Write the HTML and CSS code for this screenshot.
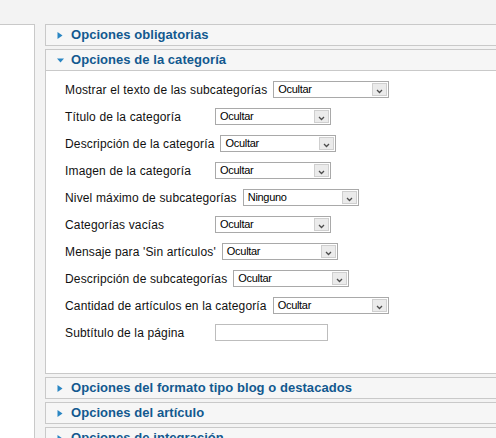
FILE: index.html
```html
<!DOCTYPE html>
<html lang="es">
<head>
<meta charset="utf-8">
<title>Opciones</title>
<link rel="stylesheet" href="styles.css">
</head>
<body>
<div class="top"></div>
<div class="main">
  <aside class="side"></aside>
  <div class="panes">
    <div class="panel">
      <h3 class="panel-title"><svg class="arrow" width="7" height="7" viewBox="0 0 7 7"><path d="M0.5 0L5.5 3.5L0.5 7Z"/></svg><span>Opciones obligatorias</span></h3>
    </div>
    <div class="panel open">
      <h3 class="panel-title"><svg class="arrow" width="7" height="7" viewBox="0 0 7 7"><path d="M0 1.5L7 1.5L3.5 5.5Z"/></svg><span>Opciones de la categoría</span></h3>
      <div class="panel-body">
        <div class="row"><label>Mostrar el texto de las subcategorías</label><div class="sel"><span class="sel-text">Ocultar</span><span class="sel-btn"><svg width="7" height="5" viewBox="0 0 7 5"><path d="M1 1L3.5 3.5L6 1" /></svg></span></div></div>
        <div class="row"><label>Título de la categoría</label><div class="sel"><span class="sel-text">Ocultar</span><span class="sel-btn"><svg width="7" height="5" viewBox="0 0 7 5"><path d="M1 1L3.5 3.5L6 1" /></svg></span></div></div>
        <div class="row"><label>Descripción de la categoría</label><div class="sel"><span class="sel-text">Ocultar</span><span class="sel-btn"><svg width="7" height="5" viewBox="0 0 7 5"><path d="M1 1L3.5 3.5L6 1" /></svg></span></div></div>
        <div class="row"><label>Imagen de la categoría</label><div class="sel"><span class="sel-text">Ocultar</span><span class="sel-btn"><svg width="7" height="5" viewBox="0 0 7 5"><path d="M1 1L3.5 3.5L6 1" /></svg></span></div></div>
        <div class="row"><label>Nivel máximo de subcategorías</label><div class="sel"><span class="sel-text">Ninguno</span><span class="sel-btn"><svg width="7" height="5" viewBox="0 0 7 5"><path d="M1 1L3.5 3.5L6 1" /></svg></span></div></div>
        <div class="row"><label>Categorías vacías</label><div class="sel"><span class="sel-text">Ocultar</span><span class="sel-btn"><svg width="7" height="5" viewBox="0 0 7 5"><path d="M1 1L3.5 3.5L6 1" /></svg></span></div></div>
        <div class="row"><label>Mensaje para 'Sin artículos'</label><div class="sel"><span class="sel-text">Ocultar</span><span class="sel-btn"><svg width="7" height="5" viewBox="0 0 7 5"><path d="M1 1L3.5 3.5L6 1" /></svg></span></div></div>
        <div class="row"><label>Descripción de subcategorías</label><div class="sel"><span class="sel-text">Ocultar</span><span class="sel-btn"><svg width="7" height="5" viewBox="0 0 7 5"><path d="M1 1L3.5 3.5L6 1" /></svg></span></div></div>
        <div class="row"><label>Cantidad de artículos en la categoría</label><div class="sel"><span class="sel-text">Ocultar</span><span class="sel-btn"><svg width="7" height="5" viewBox="0 0 7 5"><path d="M1 1L3.5 3.5L6 1" /></svg></span></div></div>
        <div class="row"><label>Subtítulo de la página</label><span class="text-input"></span></div>
      </div>
    </div>
    <div class="panel">
      <h3 class="panel-title"><svg class="arrow" width="7" height="7" viewBox="0 0 7 7"><path d="M0.5 0L5.5 3.5L0.5 7Z"/></svg><span>Opciones del formato tipo blog o destacados</span></h3>
    </div>
    <div class="panel">
      <h3 class="panel-title"><svg class="arrow" width="7" height="7" viewBox="0 0 7 7"><path d="M0.5 0L5.5 3.5L0.5 7Z"/></svg><span>Opciones del artículo</span></h3>
    </div>
    <div class="panel">
      <h3 class="panel-title"><svg class="arrow" width="7" height="7" viewBox="0 0 7 7"><path d="M0.5 0L5.5 3.5L0.5 7Z"/></svg><span>Opciones de integración</span></h3>
    </div>
  </div>
</div>
</body>
</html>
```
FILE: styles.css
```css
html, body {
  margin: 0;
  height: 438px;
  overflow: hidden;
}
body {
  background: #f3f3f3;
  font-family: "Liberation Sans", Arial, sans-serif;
}
.top {
  height: 24px;
}
.main {
  display: flex;
  align-items: flex-start;
  height: 414px;
}
.side {
  width: 34px;
  align-self: stretch;
  background: #fff;
  border-top: 1px solid #c9c9c9;
  border-right: 1px solid #c9c9c9;
}
.panes {
  flex: 1;
  margin-left: 10px;
  margin-right: -30px;
  display: flex;
  flex-direction: column;
  gap: 3px;
}
.panel {
  border: 1px solid #c9c9c9;
  background: #fff;
}
.panel-title {
  margin: 0;
  height: 20px;
  display: flex;
  align-items: center;
  padding-left: 11px;
  background: #f6f6f6;
  font-size: 13px;
  font-weight: bold;
  line-height: 20px;
  letter-spacing: 0.05px;
  color: #12598f;
}
.arrow {
  display: block;
  margin-right: 7px;
  fill: #2a86c3;
}
.open .panel-title {
  border-bottom: 1px solid #c9c9c9;
}
.panel-body {
  padding: 10px 0 32px 19px;
  display: flex;
  flex-direction: column;
  gap: 10px;
}
.row {
  display: flex;
  align-items: center;
  height: 17px;
}
.row label {
  min-width: 144px;
  margin-right: 6px;
  font-size: 12px;
  letter-spacing: 0.15px;
  color: #111;
  white-space: nowrap;
}
.sel {
  width: 116px;
  height: 17px;
  box-sizing: border-box;
  border: 1px solid #a9a9a9;
  background: #fff;
  display: flex;
}
.sel-text {
  flex: 1;
  padding-left: 4px;
  font-size: 11px;
  letter-spacing: -0.3px;
  line-height: 15px;
  color: #000;
}
.sel-btn {
  width: 15px;
  height: 13px;
  margin: 1px;
  box-sizing: border-box;
  border: 1px solid #cfcfcf;
  background: #ebebeb;
  display: flex;
  align-items: flex-end;
  justify-content: center;
  padding-bottom: 1px;
}
.sel-btn svg {
  display: block;
  fill: none;
  stroke: #4d4d4d;
  stroke-width: 1.3;
}
.text-input {
  display: block;
  width: 113px;
  height: 17px;
  box-sizing: border-box;
  border: 1px solid #bdbdbd;
  background: #fff;
}
```
